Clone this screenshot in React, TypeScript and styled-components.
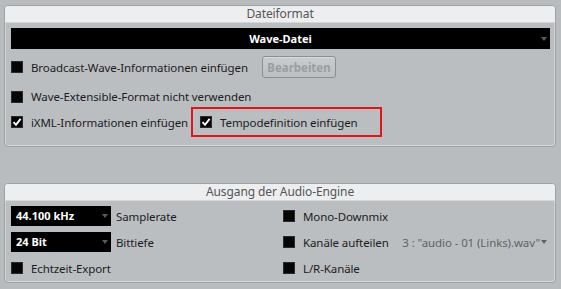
import React from 'react';
import styled, {createGlobalStyle} from 'styled-components';

const bg = '#b9bcbf';
const ink = '#1c1c1c';

const GlobalStyle = createGlobalStyle`
  html, body {
    margin: 0;
    padding: 0;
    background: ${bg};
  }
  body {
    font-family: "Noto Sans", "Open Sans", sans-serif;
    font-size: 11.5px;
    letter-spacing: -0.1px;
    color: ${ink};
  }
`

const Page = styled.div`
  width: 561px;
  height: 289px;
  box-sizing: border-box;
  padding: 5px 5px 0 4px;
  display: flex;
  flex-direction: column;
  gap: 36px;
`

const Panel = styled.section<{ $height: number }>`
  height: ${p => p.$height}px;
  box-sizing: border-box;
  border: 1px solid #9fa2a5;
  border-radius: 4px;
  background: #bbbec1;
  box-shadow: inset 1px 1px 0 #d4d6d8, inset -1px -1px 0 #d4d6d8;
  overflow: hidden;
  display: flex;
  flex-direction: column;
`

const PanelTitle = styled.div`
  height: 16px;
  flex: none;
  background: #eceef0;
  color: #555;
  font-size: 12px;
  line-height: 16px;
  text-align: center;
  border-bottom: 1px solid #d6d8da;
`

const PanelBody = styled.div<{ $top: number }>`
  padding: ${p => p.$top}px 5px 0 6px;
  display: flex;
  flex-direction: column;
`

const Dropdown = styled.div<{ $width?: number; $height: number; $center?: boolean }>`
  position: relative;
  width: ${p => (p.$width ? `${p.$width}px` : 'auto')};
  height: ${p => p.$height}px;
  background: #000;
  color: #fff;
  font-weight: 700;
  font-size: 11px;
  letter-spacing: 0;
  line-height: ${p => p.$height}px;
  padding-left: ${p => (p.$center ? 0 : 5)}px;
  text-align: ${p => (p.$center ? 'center' : 'left')};
  box-sizing: border-box;
  flex: none;
`

const Arrow = styled.span<{ $color?: string }>`
  position: absolute;
  right: 3px;
  top: 50%;
  margin-top: -2px;
  width: 0;
  height: 0;
  border-left: 3.5px solid transparent;
  border-right: 3.5px solid transparent;
  border-top: 4px solid ${p => p.$color || '#5a5a5a'};
`

const Row = styled.div<{ $height: number; $top?: number }>`
  height: ${p => p.$height}px;
  margin-top: ${p => p.$top || 0}px;
  display: flex;
  align-items: center;
`

const Box = styled.span`
  width: 12px;
  height: 12px;
  flex: none;
  background: #050505;
  border: 1px solid #2a2a2a;
  box-sizing: border-box;
  display: inline-flex;
  align-items: center;
  justify-content: center;
  margin-right: 8px;
`

const CheckLabel = styled.span`
  display: inline-flex;
  align-items: center;
  white-space: nowrap;
`

const Check = ({checked, label}: { checked?: boolean; label: string }) => (
  <CheckLabel>
    <Box>
      {checked && (
        <svg width="10" height="10" viewBox="0 0 10 10">
          <path d="M1.5 5.2 L4 7.8 L8.6 1.8" stroke="#fff" strokeWidth="1.9" fill="none"/>
        </svg>
      )}
    </Box>
    {label}
  </CheckLabel>
);

const Button = styled.button`
  margin-left: 14px;
  height: 22px;
  width: 74px;
  padding: 0;
  border: 1px solid #8c8f92;
  border-radius: 3px;
  background: linear-gradient(#c9cbce, #bdc0c3);
  box-shadow: inset 0 1px 0 #d8dadc;
  color: #9a9da0;
  font-family: inherit;
  font-size: 11.5px;
  font-weight: 700;
`

const Highlight = styled.div`
  margin-left: 3px;
  width: 191px;
  height: 30px;
  box-sizing: border-box;
  border: 2px solid #e0161b;
  padding-left: 7px;
  display: flex;
  align-items: center;
`

const Columns = styled.div`
  display: grid;
  grid-template-columns: 272px 1fr;
`

const Col = styled.div`
  display: flex;
  flex-direction: column;
`

const Caption = styled.span`
  margin-left: 5px;
`

const FileName = styled.span`
  margin-left: auto;
  color: #5f6265;
  position: relative;
  padding-right: 10px;
  white-space: nowrap;
`

export default function App() {
  return (
    <>
      <GlobalStyle/>
      <Page>
        <Panel $height={142}>
          <PanelTitle>Dateiformat</PanelTitle>
          <PanelBody $top={5}>
            <Dropdown $height={21} $center>
              Wave-Datei
              <Arrow/>
            </Dropdown>
            <Row $height={22} $top={7}>
              <Check label="Broadcast-Wave-Informationen einfügen"/>
              <Button disabled>Bearbeiten</Button>
            </Row>
            <Row $height={21} $top={8}>
              <Check label="Wave-Extensible-Format nicht verwenden"/>
            </Row>
            <Row $height={30}>
              <Check checked label="iXML-Informationen einfügen"/>
              <Highlight>
                <Check checked label="Tempodefinition einfügen"/>
              </Highlight>
            </Row>
          </PanelBody>
        </Panel>
        <Panel $height={100}>
          <PanelTitle>Ausgang der Audio-Engine</PanelTitle>
          <PanelBody $top={2}>
            <Columns>
              <Col>
                <Row $height={26}>
                  <Dropdown $width={100} $height={20}>44.100 kHz<Arrow/></Dropdown>
                  <Caption>Samplerate</Caption>
                </Row>
                <Row $height={26}>
                  <Dropdown $width={100} $height={20}>24 Bit<Arrow/></Dropdown>
                  <Caption>Bittiefe</Caption>
                </Row>
                <Row $height={26}>
                  <Check label="Echtzeit-Export"/>
                </Row>
              </Col>
              <Col>
                <Row $height={26}>
                  <Check label="Mono-Downmix"/>
                </Row>
                <Row $height={26}>
                  <Check label="Kanäle aufteilen"/>
                  <FileName>3 : "audio - 01 (Links).wav"<Arrow $color="#5f6265"/></FileName>
                </Row>
                <Row $height={26}>
                  <Check label="L/R-Kanäle"/>
                </Row>
              </Col>
            </Columns>
          </PanelBody>
        </Panel>
      </Page>
    </>
  );
}
